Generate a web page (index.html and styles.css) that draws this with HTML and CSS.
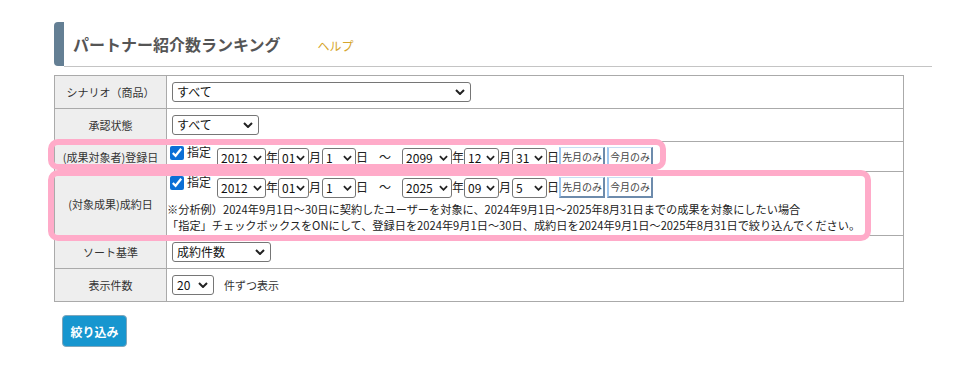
FILE: index.html
```html
<!DOCTYPE html>
<html lang="ja">
<head>
<meta charset="utf-8">
<title>パートナー紹介数ランキング</title>
<link rel="stylesheet" href="styles.css">
</head>
<body>
<div class="page">
  <div class="head">
    <div class="head-bar"></div>
    <div class="head-main">
      <h1 class="title">パートナー紹介数ランキング</h1>
      <a class="help">ヘルプ</a>
    </div>
  </div>

  <div class="form-wrap">
    <div class="form">
      <div class="lbl">シナリオ（商品）</div>
      <div class="val"><select class="sel w-scenario"><option>すべて</option></select></div>

      <div class="lbl">承認状態</div>
      <div class="val"><select class="sel w-status"><option>すべて</option></select></div>

      <div class="lbl">(成果対象者)登録日</div>
      <div class="val val-top">
        <div class="dates">
          <input type="checkbox" class="chk" checked>
          <span class="spec">指定</span>
          <select class="sel sm w-year first"><option>2012</option></select><span class="u">年</span>
          <select class="sel sm w-mon1"><option>01</option></select><span class="u u-m">月</span>
          <select class="sel sm w-day1"><option>1</option></select><span class="u">日</span>
          <span class="tilde">～</span>
          <select class="sel sm w-year2"><option>2099</option></select><span class="u">年</span>
          <select class="sel sm w-mon2"><option>12</option></select><span class="u u-m">月</span>
          <select class="sel sm w-day2"><option>31</option></select><span class="u">日</span>
          <button class="btn">先月のみ</button><button class="btn btn-2">今月のみ</button>
        </div>
      </div>

      <div class="lbl">(対象成果)成約日</div>
      <div class="val val-top val-col">
        <div class="dates">
          <input type="checkbox" class="chk" checked>
          <span class="spec">指定</span>
          <select class="sel sm w-year first"><option>2012</option></select><span class="u">年</span>
          <select class="sel sm w-mon1"><option>01</option></select><span class="u u-m">月</span>
          <select class="sel sm w-day1"><option>1</option></select><span class="u">日</span>
          <span class="tilde">～</span>
          <select class="sel sm w-year2"><option>2025</option></select><span class="u">年</span>
          <select class="sel sm w-mon2"><option>09</option></select><span class="u u-m">月</span>
          <select class="sel sm w-day2"><option>5</option></select><span class="u">日</span>
          <button class="btn">先月のみ</button><button class="btn btn-2">今月のみ</button>
        </div>
        <p class="note">※分析例）2024年9月1日～30日に契約したユーザーを対象に、2024年9月1日～2025年8月31日までの成果を対象にしたい場合<br>「指定」チェックボックスをONにして、登録日を2024年9月1日～30日、成約日を2024年9月1日～2025年8月31日で絞り込んでください。</p>
      </div>

      <div class="lbl">ソート基準</div>
      <div class="val"><select class="sel w-sort"><option>成約件数</option></select></div>

      <div class="lbl">表示件数</div>
      <div class="val"><select class="sel w-count"><option>20</option></select><span class="per">件ずつ表示</span></div>
    </div>
    <div class="hl hl-1"></div>
    <div class="hl hl-2"></div>
  </div>

  <div class="actions">
    <button class="submit">絞り込み</button>
  </div>
</div>
</body>
</html>
```

FILE: styles.css
```css
* { box-sizing: border-box; }

body {
  margin: 0;
  background: #fff;
  color: #333;
  font-family: "Noto Sans CJK JP", "Noto Sans", sans-serif;
}

.page {
  padding: 22px 0 0 54px;
}

/* header */
.head {
  display: flex;
  width: 878px;
  height: 45px;
}
.head-bar {
  width: 10px;
  height: 44px;
  background: #647f94;
  border-radius: 4px 0 0 4px;
}
.head-main {
  flex: 1;
  display: flex;
  align-items: center;
  padding-left: 9px;
  border-bottom: 1px solid #c4c4c4;
}
.title {
  margin: 0;
  font-size: 16px;
  line-height: 20px;
  font-weight: bold;
  color: #555;
}
.help {
  margin: 3px 0 0 37px;
  font-size: 12px;
  line-height: 16px;
  color: #d6a52c;
}

/* form grid */
.form-wrap {
  position: relative;
  width: 850px;
  margin-top: 8px;
}
.form {
  display: grid;
  grid-template-columns: 112px 737px;
  grid-template-rows: 33px 33px 30px 64px 33px 33px;
  border-top: 1px solid #aaa;
  border-left: 1px solid #aaa;
}
.lbl,
.val {
  border-right: 1px solid #aaa;
  border-bottom: 1px solid #aaa;
  font-size: 11px;
}
.lbl {
  display: flex;
  align-items: center;
  justify-content: center;
  background: #eee;
  color: #333;
}
.val {
  display: flex;
  align-items: center;
  padding-left: 5px;
  background: #fff;
}
.val-top {
  align-items: flex-start;
  padding-top: 5px;
}
.val-col {
  flex-direction: column;
}

/* selects */
.sel {
  -webkit-appearance: none;
  appearance: none;
  height: 20px;
  margin: 0;
  padding: 0 0 0 4px;
  border: 1px solid #767676;
  border-radius: 3px;
  background: #fff url("data:image/svg+xml,%3Csvg xmlns='http://www.w3.org/2000/svg' width='10' height='6' viewBox='0 0 10 6'%3E%3Cpath d='M1 1l4 4 4-4' fill='none' stroke='%23222' stroke-width='2'/%3E%3C/svg%3E") no-repeat right 5px center / 10px 6px;
  font-family: "Noto Sans CJK JP", sans-serif;
  font-size: 12px;
  line-height: 18px;
  color: #111;
}
.sel.sm {
  padding-left: 3px;
  background-position: right 3px center;
  background-size: 9px 6px;
}
.w-scenario { width: 299px; }
.w-status { width: 87px; }
.w-sort { width: 99px; }
.w-count { width: 42px; }
.w-year { width: 49px; }
.w-year2 { width: 50px; }
.w-mon1 { width: 31px; }
.w-mon2 { width: 35px; }
.w-day1 { width: 34px; }
.w-day2 { width: 35px; }

/* date lines */
.dates {
  display: flex;
  align-items: flex-start;
  height: 21px;
}
.chk {
  width: 14px;
  height: 14px;
  margin: -1px 0 0 -2px;
  accent-color: #0b6fd6;
}
.spec {
  margin: -2px 0 0 3px;
  font-size: 12px;
  line-height: 14px;
  color: #222;
}
.dates .sel {
  margin-top: 1px;
}
.dates .first {
  margin-left: 6px;
}
.u {
  font-size: 12px;
  line-height: 20px;
  color: #222;
}
.u-m {
  margin: 0 1px 0 0;
}
.tilde {
  margin: 0 11px;
  font-size: 12px;
  line-height: 20px;
  color: #222;
}
.btn {
  width: 46px;
  height: 21px;
  margin: 0;
  padding: 0;
  border-style: solid;
  border-width: 1px 2px 2px 2px;
  border-color: #c8def3 #6d8bac #6d8bac #9fc6ee;
  background: #fff;
  font-family: "Noto Sans CJK JP", sans-serif;
  font-size: 10px;
  line-height: 18px;
  color: #444;
}
.btn-2 {
  margin-left: 2px;
}
.note {
  margin: 3px 0 0 -5px;
  font-size: 11.2px;
  line-height: 16px;
  color: #222;
}
.per {
  margin-left: 10px;
  font-size: 11px;
  color: #333;
}

/* pink highlight annotations */
.hl {
  position: absolute;
  border: 6px solid #ffabc9;
  border-radius: 10px;
  pointer-events: none;
}
.hl-1 {
  left: -6px;
  top: 64px;
  width: 618px;
  height: 31px;
}
.hl-2 {
  left: -6px;
  top: 95px;
  width: 823px;
  height: 71px;
}

/* submit */
.actions {
  margin: 13px 0 0 8px;
}
.submit {
  width: 65px;
  height: 32px;
  padding: 0;
  border: 1px solid #7fa6bb;
  border-radius: 4px;
  background: #1796cf;
  color: #fff;
  font-family: "Noto Sans CJK JP", sans-serif;
  font-size: 12px;
  font-weight: bold;
}
```
